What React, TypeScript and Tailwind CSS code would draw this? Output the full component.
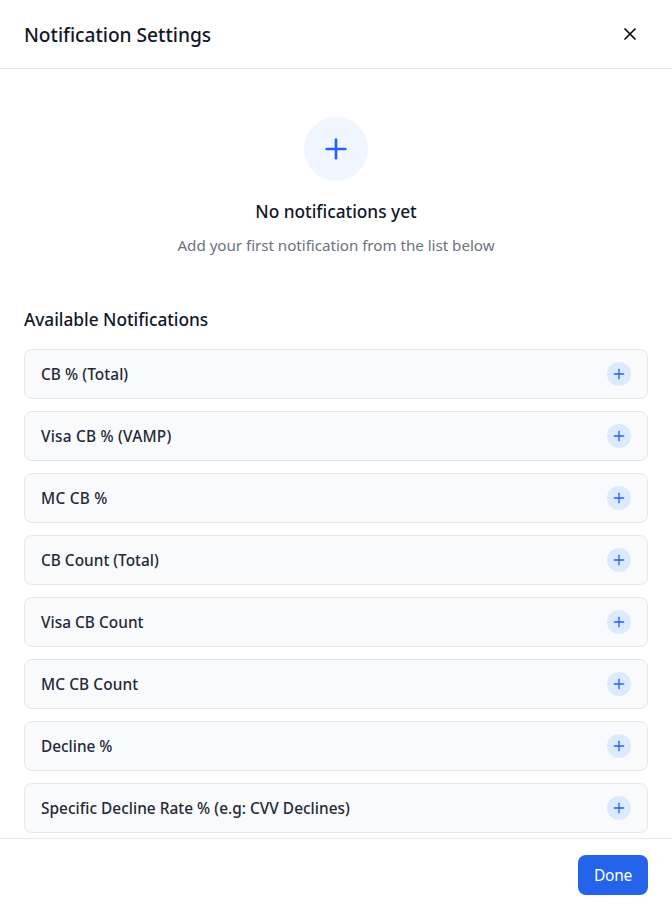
import { Plus, X } from "lucide-react";

const items = [
  { label: "CB % (Total)", tracking: "tracking-[0.07px]" },
  { label: "Visa CB % (VAMP)", tracking: "tracking-[0.22px]" },
  { label: "MC CB %", tracking: "tracking-[0.25px]" },
  { label: "CB Count (Total)", tracking: "tracking-[0.01px]" },
  { label: "Visa CB Count", tracking: "tracking-[0.03px]" },
  { label: "MC CB Count", tracking: "tracking-[0.1px]" },
  { label: "Decline %", tracking: "tracking-[-0.01px]" },
  { label: "Specific Decline Rate % (e.g: CVV Declines)", tracking: "tracking-[0.03px]" },
];

export default function App() {
  return (
    <div className="flex h-[911px] w-full flex-col overflow-hidden bg-white font-['Noto_Sans','Open_Sans',sans-serif] text-[#111827]">
      <header className="flex h-[69px] shrink-0 items-center justify-between border-b border-[#e5e7eb] px-6">
        <h2 className="whitespace-nowrap pt-0.5 text-[19.2px] font-medium leading-7 tracking-[-0.02px]">Notification Settings</h2>
        <button className="mr-2 text-black" aria-label="Close">
          <X size={20} strokeWidth={2} />
        </button>
      </header>
      <main className="min-h-0 flex-1 overflow-hidden px-6 pt-12">
        <div className="flex flex-col items-center">
          <div className="flex size-16 items-center justify-center rounded-full bg-[#eff6ff] text-[#2563eb]">
            <Plus size={32} strokeWidth={2} />
          </div>
          <h3 className="mt-[17px] whitespace-nowrap text-[17.3px] font-medium leading-7 tracking-[-0.01px]">No notifications yet</h3>
          <p className="mt-[7px] whitespace-nowrap text-[15.2px] leading-6 tracking-[-0.04px] text-[#6b7280]">Add your first notification from the list below</p>
        </div>
        <h3 className="mt-[49px] whitespace-nowrap text-[17.3px] font-medium leading-7 tracking-[-0.03px]">Available Notifications</h3>
        <ul className="mt-[15px] flex flex-col gap-3">
          {items.map((item) => (
            <li key={item.label} className="flex h-[50px] shrink-0 items-center justify-between rounded-lg border border-[#e5e7eb] bg-[#f9fafb] px-4">
              <span className={`whitespace-nowrap pt-px text-[15.4px] leading-6 font-medium text-[#1f2937] ${item.tracking}`}>{item.label}</span>
              <button className="flex size-6 items-center justify-center rounded-full bg-[#dbeafe] text-[#2563eb]" aria-label="Add">
                <Plus size={16} strokeWidth={2} />
              </button>
            </li>
          ))}
        </ul>
      </main>
      <footer className="flex h-[73px] shrink-0 items-center justify-end border-t border-[#e5e7eb] px-6">
        <button className="h-10 w-[70px] rounded-lg bg-[#2563eb] pt-0.5 text-[15.5px] tracking-[-0.2px] text-white">Done</button>
      </footer>
    </div>
  );
}
